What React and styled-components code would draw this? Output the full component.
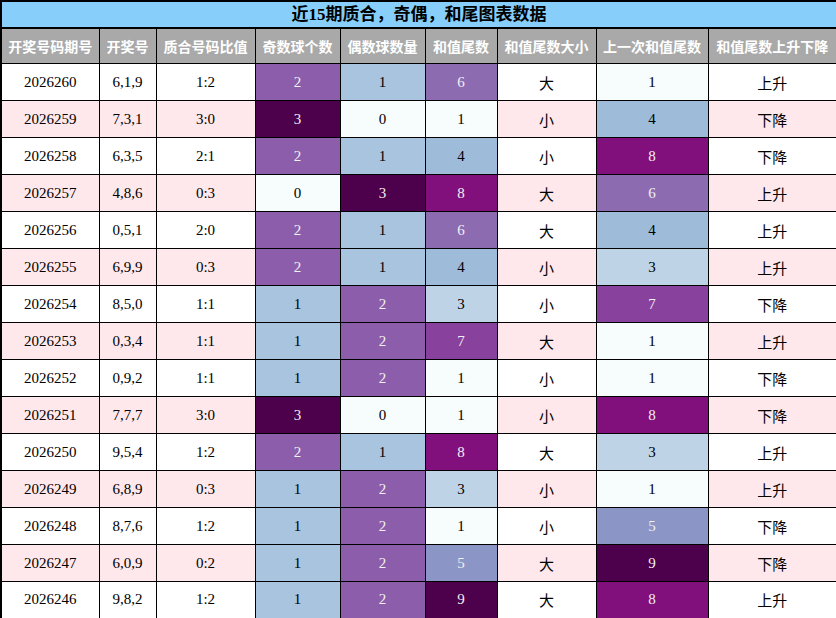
import React from 'react'
import styled, { createGlobalStyle } from 'styled-components'

const GlobalStyle = createGlobalStyle`
  html, body {
    margin: 0;
    padding: 0;
    background: #ffffff;
  }
`

const BUPU = [
  [247, 252, 253],
  [224, 236, 244],
  [191, 211, 230],
  [158, 188, 218],
  [140, 150, 198],
  [140, 107, 177],
  [136, 65, 157],
  [129, 15, 124],
  [77, 0, 75]
]

const toLinear = c => {
  const v = c / 255
  return v <= 0.03928 ? v / 12.92 : Math.pow((v + 0.055) / 1.055, 2.4)
}

// background gradient like pandas' Styler.background_gradient(cmap='BuPu')
const gradient = (value, min, max) => {
  const t = max === min ? 0 : (value - min) / (max - min)
  const pos = t * (BUPU.length - 1)
  const i = Math.min(Math.floor(pos), BUPU.length - 2)
  const f = pos - i
  const rgb = BUPU[i].map((c, k) => Math.round(c + (BUPU[i + 1][k] - c) * f))
  const lum = 0.2126 * toLinear(rgb[0]) + 0.7152 * toLinear(rgb[1]) + 0.0722 * toLinear(rgb[2])
  return {
    bg: `rgb(${rgb.join(',')})`,
    fg: lum < 0.408 ? '#f1f1f1' : '#000000'
  }
}

const rows = [
  ['2026260', '6,1,9', '1:2', 2, 1, 6, '大', 1, '上升'],
  ['2026259', '7,3,1', '3:0', 3, 0, 1, '小', 4, '下降'],
  ['2026258', '6,3,5', '2:1', 2, 1, 4, '小', 8, '下降'],
  ['2026257', '4,8,6', '0:3', 0, 3, 8, '大', 6, '上升'],
  ['2026256', '0,5,1', '2:0', 2, 1, 6, '大', 4, '上升'],
  ['2026255', '6,9,9', '0:3', 2, 1, 4, '小', 3, '上升'],
  ['2026254', '8,5,0', '1:1', 1, 2, 3, '小', 7, '下降'],
  ['2026253', '0,3,4', '1:1', 1, 2, 7, '大', 1, '上升'],
  ['2026252', '0,9,2', '1:1', 1, 2, 1, '小', 1, '下降'],
  ['2026251', '7,7,7', '3:0', 3, 0, 1, '小', 8, '下降'],
  ['2026250', '9,5,4', '1:2', 2, 1, 8, '大', 3, '上升'],
  ['2026249', '6,8,9', '0:3', 1, 2, 3, '小', 1, '上升'],
  ['2026248', '8,7,6', '1:2', 1, 2, 1, '小', 5, '下降'],
  ['2026247', '6,0,9', '0:2', 1, 2, 5, '大', 9, '下降'],
  ['2026246', '9,8,2', '1:2', 1, 2, 9, '大', 8, '上升']
]

const columns = [
  { title: '开奖号码期号', width: 98 },
  { title: '开奖号', width: 57 },
  { title: '质合号码比值', width: 99 },
  { title: '奇数球个数', width: 85, range: [0, 3] },
  { title: '偶数球数量', width: 85, range: [0, 3] },
  { title: '和值尾数', width: 72, range: [1, 9] },
  { title: '和值尾数大小', width: 99, cjk: true },
  { title: '上一次和值尾数', width: 112, range: [1, 9] },
  { title: '和值尾数上升下降', width: 129, cjk: true }
]

const Table = styled.table`
  width: 836px;
  table-layout: fixed;
  border-collapse: collapse;
  border: 2px solid #000;
  font-family: "Liberation Serif", "Noto Sans CJK SC", serif;
`

const Caption = styled.th`
  height: 25px;
  padding: 0;
  background: #87cefa;
  color: #000;
  border: 1px solid #000;
  border-bottom-width: 2px;
  font-size: 17px;
  font-weight: bold;
  text-align: center;
  line-height: 25px;
`

const HeadCell = styled.th`
  height: 34px;
  padding: 0;
  background: #a9a9a9;
  color: #ffffff;
  border: 1px solid #000;
  font-family: "Noto Sans CJK SC", sans-serif;
  font-size: 14px;
  font-weight: bold;
  text-align: center;
  white-space: nowrap;
`

const Row = styled.tr`
  height: 37px;
  background: ${props => (props.$striped ? '#ffe8ec' : '#ffffff')};
`

const Cell = styled.td`
  padding: 0;
  border: 1px solid #000;
  text-align: center;
  font-size: 15px;
  color: #000;
  font-family: ${props => (props.$cjk
    ? '"Noto Sans CJK SC", sans-serif'
    : '"Liberation Serif", "Noto Sans CJK SC", serif')};
`

const App = () => (
  <>
    <GlobalStyle />
    <Table>
      <colgroup>
        {columns.map(col => (
          <col key={col.title} style={{ width: col.width }} />
        ))}
      </colgroup>
      <thead>
        <tr>
          <Caption colSpan={columns.length}>近15期质合，奇偶，和尾图表数据</Caption>
        </tr>
        <tr>
          {columns.map(col => (
            <HeadCell key={col.title}>{col.title}</HeadCell>
          ))}
        </tr>
      </thead>
      <tbody>
        {rows.map((row, r) => (
          <Row key={row[0]} $striped={r % 2 === 1}>
            {row.map((value, c) => {
              const col = columns[c]
              if (col.range) {
                const { bg, fg } = gradient(value, col.range[0], col.range[1])
                return (
                  <Cell key={c} style={{ background: bg, color: fg }}>
                    {value}
                  </Cell>
                )
              }
              return (
                <Cell key={c} $cjk={col.cjk}>
                  {value}
                </Cell>
              )
            })}
          </Row>
        ))}
      </tbody>
    </Table>
  </>
)

export default App
